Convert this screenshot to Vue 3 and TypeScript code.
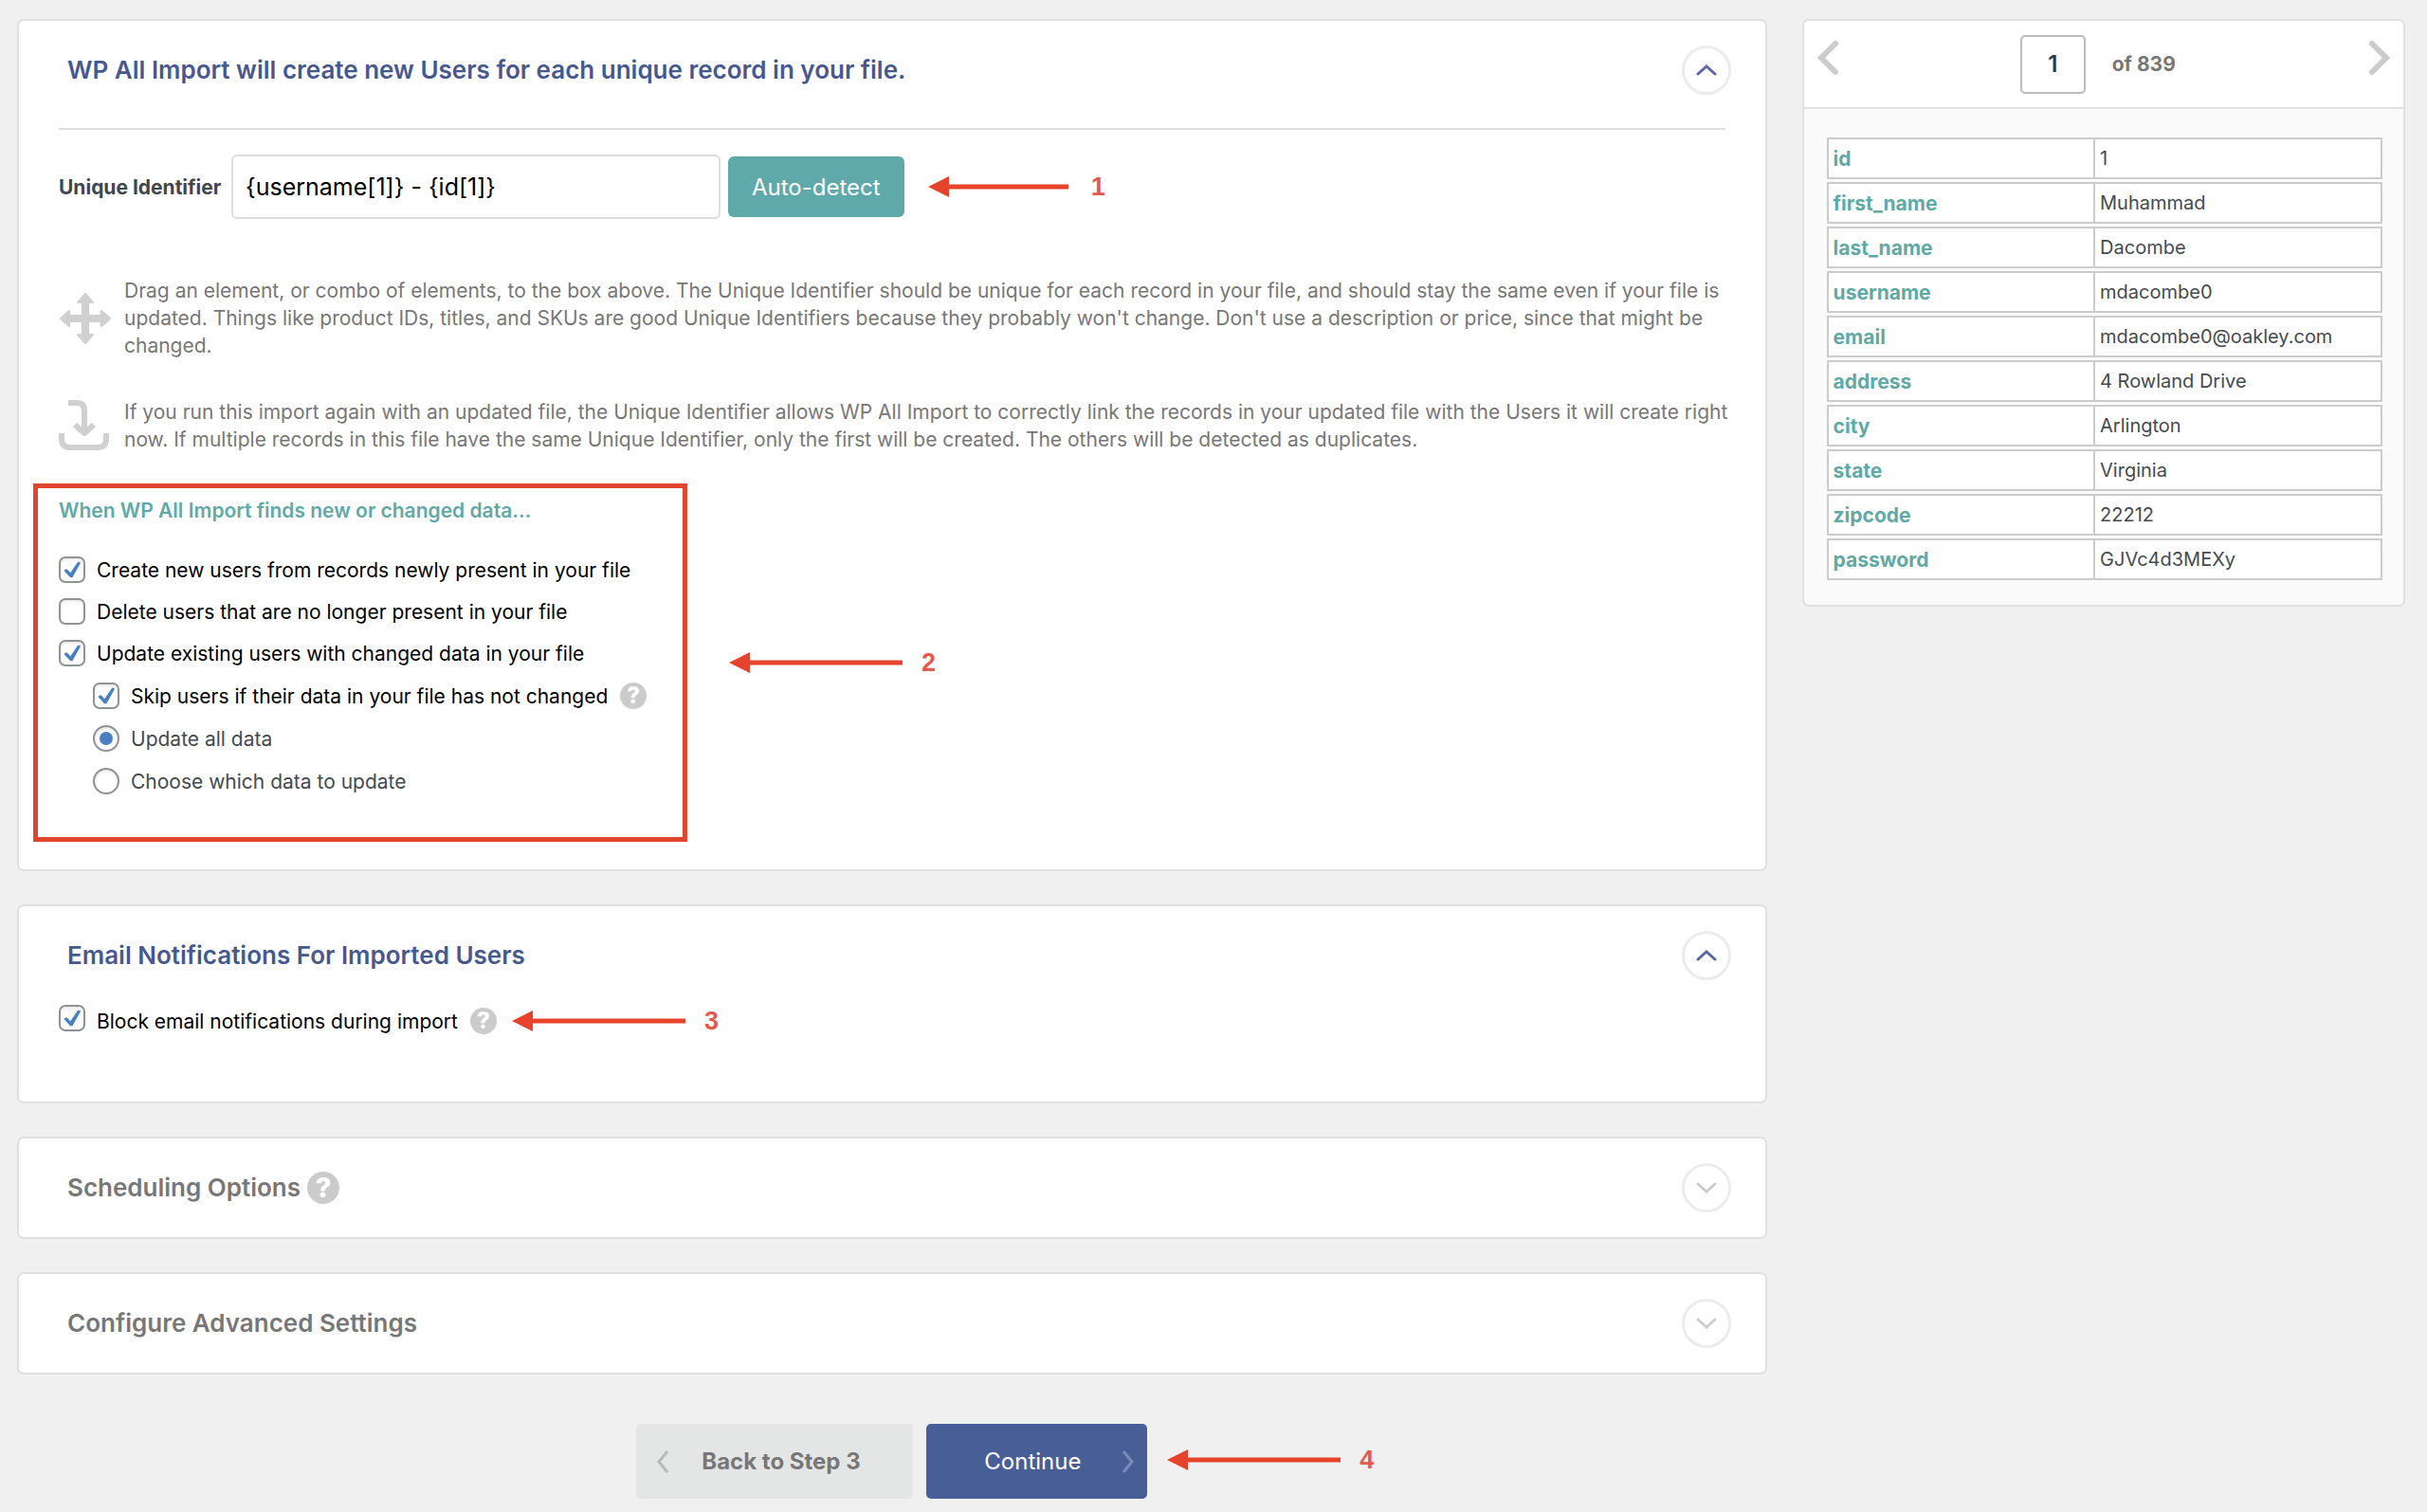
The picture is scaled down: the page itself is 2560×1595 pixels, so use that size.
<script setup lang="ts">
import { ref } from 'vue'

interface Field {
  name: string
  value: string
}

const identifier = ref('{username[1]} - {id[1]}')
const recordNumber = ref('1')
const createNew = ref(true)
const deleteMissing = ref(false)
const updateExisting = ref(true)
const skipUnchanged = ref(true)
const updateMode = ref('all')
const blockEmails = ref(true)

const fields: Field[] = [
  { name: 'id', value: '1' },
  { name: 'first_name', value: 'Muhammad' },
  { name: 'last_name', value: 'Dacombe' },
  { name: 'username', value: 'mdacombe0' },
  { name: 'email', value: 'mdacombe0@oakley.com' },
  { name: 'address', value: '4 Rowland Drive' },
  { name: 'city', value: 'Arlington' },
  { name: 'state', value: 'Virginia' },
  { name: 'zipcode', value: '22212' },
  { name: 'password', value: 'GJVc4d3MEXy' },
]
</script>

<template>
  <div class="page">
    <main class="main">
      <section class="card">
        <header class="card-head open">
          <h2>WP All Import will create new Users for each unique record in your file.</h2>
          <button type="button" class="toggle" aria-label="Collapse section">
            <svg width="22" height="14" viewBox="0 0 22 14"><path d="M2 11 L11 3 L20 11" /></svg>
          </button>
        </header>
        <div class="card-body identifier-body">
          <hr />
          <div class="identifier-row">
            <label for="identifier">Unique Identifier</label>
            <input id="identifier" v-model="identifier" type="text" />
            <button type="button" class="detect">Auto-detect</button>
            <div class="note">
              <svg class="arrow" width="148" height="22" viewBox="0 0 148 22">
                <path d="M0 11 L22 0 V8.5 H148 V13.5 H22 V22 Z" />
              </svg>
              <span>1</span>
            </div>
          </div>
          <div class="hint">
            <svg class="move-icon" width="56" height="56" viewBox="0 0 56 56">
              <path d="M28 2 L36 11 H31 V25 H45 V20 L54 28 L45 36 V31 H31 V45 H36 L28 54 L20 45 H25 V31 H11 V36 L2 28 L11 20 V25 H25 V11 H20 Z" />
            </svg>
            <p>
              Drag an element, or combo of elements, to the box above. The Unique Identifier should be unique for each
              record in your file, and should stay the same even if your file is updated. Things like product IDs, titles,
              and SKUs are good Unique Identifiers because they probably won't change. Don't use a description or price,
              since that might be changed.
            </p>
          </div>
          <div class="hint">
            <svg class="import-icon" width="56" height="54" viewBox="0 0 56 54">
              <path d="M10 3 H19 Q27 3 27 11 V32" stroke-width="6" />
              <path d="M17 26 L27 35 L37 26" stroke-width="6" />
              <path d="M3 35 V41 Q3 50 12 50 H41 Q50 50 50 41 V35" stroke-width="6" />
            </svg>
            <p>
              If you run this import again with an updated file, the Unique Identifier allows WP All Import to correctly
              link the records in your updated file with the Users it will create right now. If multiple records in this
              file have the same Unique Identifier, only the first will be created. The others will be detected as
              duplicates.
            </p>
          </div>
          <div class="options-row">
            <div class="options">
              <h3>When WP All Import finds new or changed data...</h3>
              <div class="choices">
                <label class="choice"><input v-model="createNew" type="checkbox" />Create new users from records newly present in your file</label>
                <label class="choice"><input v-model="deleteMissing" type="checkbox" />Delete users that are no longer present in your file</label>
                <label class="choice"><input v-model="updateExisting" type="checkbox" />Update existing users with changed data in your file</label>
              </div>
              <div class="choices nested">
                <div class="choice">
                  <input id="skip" v-model="skipUnchanged" type="checkbox" />
                  <label for="skip">Skip users if their data in your file has not changed</label>
                  <a href="#" class="help">?</a>
                </div>
                <label class="choice soft"><input v-model="updateMode" type="radio" name="mode" value="all" />Update all data</label>
                <label class="choice soft"><input v-model="updateMode" type="radio" name="mode" value="some" />Choose which data to update</label>
              </div>
            </div>
            <div class="note">
              <svg class="arrow" width="183" height="22" viewBox="0 0 183 22">
                <path d="M0 11 L22 0 V8.5 H183 V13.5 H22 V22 Z" />
              </svg>
              <span>2</span>
            </div>
          </div>
        </div>
      </section>

      <section class="card">
        <header class="card-head open">
          <h2>Email Notifications For Imported Users</h2>
          <button type="button" class="toggle" aria-label="Collapse section">
            <svg width="22" height="14" viewBox="0 0 22 14"><path d="M2 11 L11 3 L20 11" /></svg>
          </button>
        </header>
        <div class="card-body email-body">
          <div class="choice tall">
            <input id="block" v-model="blockEmails" type="checkbox" />
            <label for="block">Block email notifications during import</label>
            <a href="#" class="help">?</a>
            <div class="note">
              <svg class="arrow" width="183" height="22" viewBox="0 0 183 22">
                <path d="M0 11 L22 0 V8.5 H183 V13.5 H22 V22 Z" />
              </svg>
              <span>3</span>
            </div>
          </div>
        </div>
      </section>

      <section class="card">
        <header class="card-head">
          <h2>Scheduling Options</h2>
          <a href="#" class="help large">?</a>
          <button type="button" class="toggle" aria-label="Expand section">
            <svg width="22" height="14" viewBox="0 0 22 14"><path d="M2 3 L11 11 L20 3" /></svg>
          </button>
        </header>
      </section>

      <section class="card">
        <header class="card-head">
          <h2>Configure Advanced Settings</h2>
          <button type="button" class="toggle" aria-label="Expand section">
            <svg width="22" height="14" viewBox="0 0 22 14"><path d="M2 3 L11 11 L20 3" /></svg>
          </button>
        </header>
      </section>

      <nav class="actions">
        <a href="#" class="back">
          <svg width="14" height="24" viewBox="0 0 14 24"><path d="M12 1 L3 12 L12 23" /></svg>
          Back to Step 3
        </a>
        <div class="next">
          <button type="button" class="continue">
            Continue
            <svg width="14" height="24" viewBox="0 0 14 24"><path d="M2 1 L11 12 L2 23" /></svg>
          </button>
          <div class="note beside">
            <svg class="arrow" width="183" height="22" viewBox="0 0 183 22">
              <path d="M0 11 L22 0 V8.5 H183 V13.5 H22 V22 Z" />
            </svg>
            <span>4</span>
          </div>
        </div>
      </nav>
    </main>

    <aside class="preview">
      <header class="preview-head">
        <button type="button" class="step" aria-label="Previous record">
          <svg width="22" height="36" viewBox="0 0 22 36"><path d="M19 3 L4 18 L19 33" /></svg>
        </button>
        <div class="pager">
          <input v-model="recordNumber" type="text" aria-label="Record number" />
          <span>of 839</span>
        </div>
        <button type="button" class="step" aria-label="Next record">
          <svg width="22" height="36" viewBox="0 0 22 36"><path d="M3 3 L18 18 L3 33" /></svg>
        </button>
      </header>
      <div class="preview-body">
        <table>
          <tbody>
            <tr v-for="field in fields" :key="field.name">
              <th scope="row">{{ field.name }}</th>
              <td>{{ field.value }}</td>
            </tr>
          </tbody>
        </table>
      </div>
    </aside>
  </div>
</template>

<style>
body {
  background: #f0f0f0;
}
</style>

<style scoped>
* {
  box-sizing: border-box;
}

.page {
  display: grid;
  grid-template-columns: minmax(0, 2.9fr) minmax(0, 1fr);
  gap: 37px;
  align-items: start;
  padding: 20px 23px 15px 18px;
  font: 400 21px/29px Inter, 'Liberation Sans', sans-serif;
  color: #777;
}

button,
input {
  font: inherit;
}

h2,
h3,
p {
  margin: 0;
}

.main {
  display: flex;
  flex-direction: column;
  gap: 35px;
}

.card {
  background: #fff;
  border: 2px solid #e0e0e0;
  border-radius: 7px;
}

.card-head {
  display: flex;
  align-items: center;
  height: 104px;
  padding: 0 36px 0 51px;
}

.card-head h2 {
  font-size: 26px;
  line-height: 36px;
  font-weight: 600;
}

.card-head.open h2 {
  color: #46588f;
}

.toggle {
  display: flex;
  align-items: center;
  justify-content: center;
  width: 52px;
  height: 52px;
  margin-left: auto;
  padding: 0;
  background: #fff;
  border: 3px solid #ececec;
  border-radius: 50%;
}

.toggle path {
  fill: none;
  stroke: #ccc;
  stroke-width: 3;
  stroke-linecap: round;
}

.open .toggle path {
  stroke: #5a67a3;
}

.card-body {
  padding: 0 42px;
}

hr {
  height: 2px;
  margin: 9px 0 26px;
  border: 0;
  background: #ddd;
}

.identifier-body {
  padding-bottom: 29px;
}

.identifier-row {
  display: flex;
  align-items: center;
  height: 68px;
  margin-bottom: 61px;
}

.identifier-row label {
  min-width: 182px;
  color: #40464d;
  font-weight: 700;
}

.identifier-row input {
  width: 516px;
  height: 68px;
  margin-right: 8px;
  padding: 0 13px;
  color: #000;
  font-size: 25px;
  border: 2px solid #ddd;
  border-radius: 6px;
}

.detect {
  height: 64px;
  margin-right: 25px;
  padding: 0 25px;
  color: #fff;
  font-size: 24px;
  background: #60a9ab;
  border: 0;
  border-radius: 6px;
}

.identifier-row .note {
  gap: 24px;
}

.note {
  display: flex;
  align-items: center;
  gap: 20px;
  color: #e35a50;
  font: 700 27px/32px 'Liberation Sans', sans-serif;
}

.arrow {
  flex: none;
  fill: #e5432b;
}

.hint {
  display: flex;
  gap: 13px;
  margin: 0 -20px 41px 0;
}

.hint svg {
  flex: none;
  align-self: center;
  stroke: #d0d0d0;
  stroke-linejoin: round;
}

.hint .move-icon {
  fill: #d0d0d0;
  stroke-width: 2;
}

.hint .import-icon {
  fill: none;
}

.options-row {
  display: flex;
  align-items: center;
  gap: 44px;
  margin: -9px 0 0 -27px;
}

.options {
  width: 690px;
  padding: 9px 22px 45px;
  border: 5px solid #e2452f;
}

.options h3 {
  margin-bottom: 34px;
  color: #60a9a6;
  font-size: 21px;
  line-height: 29px;
  font-weight: 600;
}

.choices {
  display: grid;
  gap: 16px;
}

.nested {
  gap: 17px;
  margin: 17px 0 0 36px;
}

.choice {
  display: flex;
  align-items: center;
  height: 28px;
  color: #000;
  white-space: nowrap;
}

.soft {
  color: #444a50;
}

.choice input {
  flex: none;
  display: grid;
  place-items: center;
  width: 28px;
  height: 28px;
  margin: 0 12px 0 0;
  appearance: none;
  background: #fff;
  border: 2px solid #8f9296;
  border-radius: 7px;
  box-shadow: inset 0 2px 3px #e8e8ea;
}

.choice input[type='radio'] {
  border-radius: 50%;
}

.choice input[type='checkbox']:checked::before {
  content: '';
  width: 18px;
  height: 18px;
  background: #4a7fc0;
  clip-path: polygon(2% 56%, 14% 46%, 24% 50%, 40% 68%, 84% 4%, 98% 4%, 98% 14%, 52% 96%, 40% 96%);
}

.choice input[type='radio']:checked::before {
  content: '';
  width: 14px;
  height: 14px;
  background: #4a7fc0;
  border-radius: 50%;
}

.help {
  flex: none;
  width: 28px;
  height: 28px;
  margin-left: 13px;
  color: #fff;
  font-size: 24px;
  line-height: 28px;
  font-weight: 800;
  text-align: center;
  text-decoration: none;
  background: #cbcbcb;
  border-radius: 50%;
}

.help.large {
  width: 34px;
  height: 34px;
  margin-left: 7px;
  font-size: 29px;
  line-height: 34px;
}

.email-body {
  padding-bottom: 68px;
}

.tall {
  height: 34px;
}

.tall input {
  align-self: flex-start;
}

.tall .note {
  margin-left: 16px;
}

.actions {
  display: flex;
  justify-content: center;
  gap: 14px;
  margin-top: 17px;
}

.back,
.continue {
  display: flex;
  align-items: center;
  height: 79px;
  font-size: 24px;
  border: 0;
  border-radius: 5px;
}

.back {
  gap: 34px;
  width: 292px;
  padding-left: 21px;
  color: #777;
  font-weight: 700;
  text-decoration: none;
  background: #e4e6e6;
}

.continue {
  justify-content: space-between;
  width: 233px;
  padding: 0 13px 0 61px;
  color: #fff;
  background: #485e97;
}

.back path,
.continue path {
  fill: none;
  stroke: #b8baba;
  stroke-width: 3;
}

.continue path {
  stroke: #7c8cb8;
}

.next {
  position: relative;
}

.beside {
  position: absolute;
  top: 22px;
  left: 254px;
}

.preview {
  background: #fafafa;
  border: 2px solid #e0e0e0;
  border-radius: 7px;
}

.preview-head {
  display: flex;
  align-items: center;
  justify-content: space-between;
  height: 93px;
  padding: 0 14px;
  background: #fff;
  border-bottom: 2px solid #e0e0e0;
  border-radius: 5px 5px 0 0;
}

.step {
  display: flex;
  margin-bottom: 13px;
  padding: 0;
  background: none;
  border: 0;
}

.step path {
  fill: none;
  stroke: #ccc;
  stroke-width: 6;
  stroke-linecap: round;
}

.pager {
  display: flex;
  align-items: center;
  gap: 28px;
  padding-right: 12px;
  font-weight: 700;
}

.pager input {
  width: 69px;
  height: 62px;
  padding: 0;
  color: #32373c;
  font-size: 24px;
  font-weight: 600;
  text-align: center;
  background: #fff;
  border: 2px solid #bbb;
  border-radius: 5px;
}

.preview-body {
  padding: 27px 22px 23px 24px;
}

table {
  width: 100%;
  table-layout: fixed;
  border-collapse: separate;
  border-spacing: 0 3px;
}

th,
td {
  height: 44px;
  padding: 0 5px;
  text-align: left;
  background: #fff;
  border: 2px solid #ccc;
}

th {
  width: 48%;
  color: #60a9a6;
  font-weight: 700;
  border-right: 0;
}

td {
  color: #444a50;
  font-size: 20px;
}
</style>
